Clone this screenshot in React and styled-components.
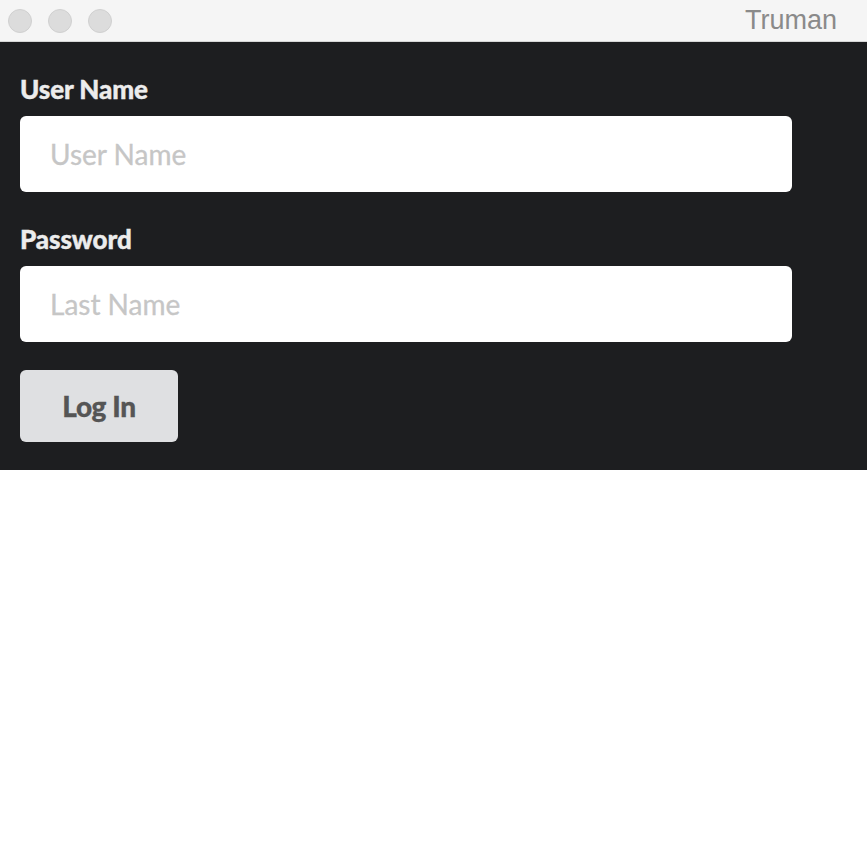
import React from "react";
import styled, { createGlobalStyle } from "styled-components";

const GlobalStyle = createGlobalStyle`
  html, body {
    margin: 0;
    padding: 0;
    background: #ffffff;
  }
  * { box-sizing: border-box; }
`;

const TitleBar = styled.div`
  height: 42px;
  background: #f5f5f5;
  border-bottom: 1px solid #d6d6d6;
  display: flex;
  align-items: center;
  padding: 0 30px 0 8px;
`;

const Lights = styled.div`
  display: flex;
  gap: 16px;
`;

const Light = styled.span`
  width: 24px;
  height: 24px;
  border-radius: 50%;
  background: #dcdcdc;
  border: 1px solid #d0d0d0;
`;

const Title = styled.div`
  margin-left: auto;
  font-family: "Liberation Sans", Arial, sans-serif;
  font-size: 27px;
  color: #8a8a8a;
`;

const Panel = styled.form`
  background: #1d1e20;
  padding: 30px 75px 28px 20px;
  display: flex;
  flex-direction: column;
  font-family: Lato, "Open Sans", sans-serif;
`;

const Label = styled.label`
  color: #ececec;
  font-weight: 900;
  font-size: 26px;
  line-height: 34px;
  letter-spacing: -0.1px;
  -webkit-text-stroke: 0.4px #ececec;
  margin-bottom: 10px;
`;

const Input = styled.input`
  height: 76px;
  border: none;
  border-radius: 6px;
  background: #ffffff;
  padding: 0 30px;
  font-family: Lato, "Open Sans", sans-serif;
  font-size: 28px;
  color: #333;
  margin-bottom: ${(p) => p.gap || 0}px;
  outline: none;
  &::placeholder {
    color: #c6c6c6;
    -webkit-text-stroke: 0.3px #c6c6c6;
  }
`;

const Button = styled.button`
  align-self: flex-start;
  width: 158px;
  height: 72px;
  border: none;
  border-radius: 6px;
  background: #dfe0e2;
  color: #555;
  font-family: Lato, "Open Sans", sans-serif;
  font-weight: 900;
  font-size: 28px;
  letter-spacing: -0.4px;
  -webkit-text-stroke: 0.3px #555;
`;

export default function App() {
  return (
    <>
      <GlobalStyle />
      <TitleBar>
        <Lights>
          <Light />
          <Light />
          <Light />
        </Lights>
        <Title>Truman</Title>
      </TitleBar>
      <Panel onSubmit={(e) => e.preventDefault()}>
        <Label htmlFor="username">User Name</Label>
        <Input id="username" placeholder="User Name" gap={30} />
        <Label htmlFor="password">Password</Label>
        <Input id="password" placeholder="Last Name" gap={28} />
        <Button type="submit">Log In</Button>
      </Panel>
    </>
  );
}
